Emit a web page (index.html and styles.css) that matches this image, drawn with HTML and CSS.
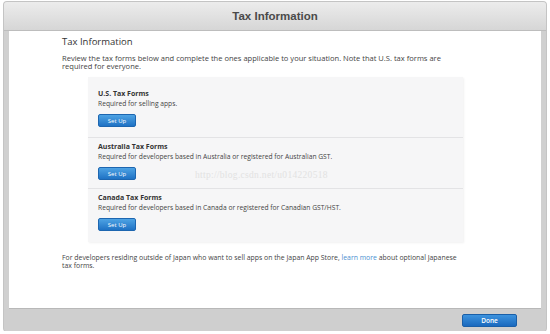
FILE: index.html
```html
<!DOCTYPE html>
<html lang="en">
<head>
    <meta charset="UTF-8">
    <meta name="viewport" content="width=device-width, initial-scale=1.0">
    <title>Tax Information</title>
    <link rel="stylesheet" href="styles.css">
</head>
<body>
    <div class="window">
        <div class="titlebar">Tax Information</div>

        <div class="content">
            <div class="column">
                <h2>Tax Information</h2>
                <p class="intro">Review the tax forms below and complete the ones applicable to your situation. Note that U.S. tax forms are required for everyone.</p>

                <div class="forms">
                    <div class="form-row first">
                        <h3>U.S. Tax Forms</h3>
                        <p>Required for selling apps.</p>
                        <button class="setup-btn">Set Up</button>
                    </div>
                    <div class="form-row">
                        <h3>Australia Tax Forms</h3>
                        <p>Required for developers based in Australia or registered for Australian GST.</p>
                        <button class="setup-btn">Set Up</button>
                    </div>
                    <div class="form-row last">
                        <h3>Canada Tax Forms</h3>
                        <p>Required for developers based in Canada or registered for Canadian GST/HST.</p>
                        <button class="setup-btn">Set Up</button>
                    </div>
                    <!-- watermark from the original capture -->
                    <span class="watermark">http://blog.csdn.net/u014220518</span>
                </div>

                <p class="note">For developers residing outside of Japan who want to sell apps on the Japan App Store, <a href="#">learn more</a> about optional Japanese <span>tax forms.</span></p>
            </div>
        </div>

        <div class="footer">
            <button class="done-btn">Done</button>
        </div>
    </div>
</body>
</html>
```

FILE: styles.css
```css
body {
    margin: 0;
    background-color: #ffffff;
    font-family: "Open Sans", "DejaVu Sans", sans-serif;
    color: #333;
}

.window {
    margin: 2px 4px 0 4px;
    height: 329px;
    display: flex;
    flex-direction: column;
    background-color: #d0d0d0;
    border-radius: 3px;
    box-shadow: 0 0 0 1px #c4c4c4;
    overflow: hidden;
}

.titlebar {
    height: 29px;
    display: flex;
    align-items: center;
    justify-content: center;
    font-family: "Liberation Sans", Arial, sans-serif;
    font-weight: bold;
    font-size: 11.5px;
    color: #4a4a4a;
    background: linear-gradient(#ececec, #d6d6d6);
    border-bottom: 1px solid #bdbdbd;
    box-sizing: border-box;
}

.content {
    height: 278px;
    margin: 0 5px;
    background-color: #ffffff;
    border-bottom: 1px solid #b8b8b8;
    box-sizing: border-box;
}

.column {
    width: 404px;
    margin-left: 53px;
    padding-top: 5px;
}

h2 {
    margin: 0;
    font-size: 9.5px;
    line-height: 12px;
    font-weight: 500;
    color: #333;
}

.intro {
    margin: 6px 0 0 0;
    font-size: 7.55px;
    line-height: 8px;
    color: #444;
}

.forms {
    position: relative;
    width: 375px;
    margin: 7px 0 0 26px;
    background-color: #f6f6f7;
    box-shadow: 1px 1px 2px rgba(0,0,0,0.06);
}

.form-row {
    padding: 4px 10px 8px 10px;
    border-bottom: 1px solid #e3e3e5;
}

.form-row.first {
    padding-top: 12px;
    padding-bottom: 10px;
}

.form-row.last {
    border-bottom: none;
    padding-bottom: 11px;
}

h3 {
    margin: 0;
    font-size: 7px;
    line-height: 10px;
    font-weight: bold;
    color: #333;
}

.form-row p {
    margin: 0;
    font-size: 6.7px;
    line-height: 10px;
    color: #444;
}

.setup-btn {
    display: block;
    margin-top: 5px;
    width: 38px;
    height: 13px;
    padding: 0;
    border: 1px solid #1d66b0;
    border-radius: 2px;
    background: linear-gradient(#4ea3e4, #1f72c4);
    color: #ffffff;
    font-family: "Open Sans", sans-serif;
    font-size: 6px;
    cursor: pointer;
}

.watermark {
    position: absolute;
    left: 107px;
    top: 93px;
    font-family: "Liberation Serif", serif;
    font-size: 9.5px;
    color: #e2e2e2;
    letter-spacing: 0.3px;
}

.note {
    margin: 12px 0 0 0;
    font-size: 6.9px;
    line-height: 8px;
    color: #444;
}

.note a {
    color: #4a8fd0;
    text-decoration: none;
}

.footer {
    flex: 1;
    display: flex;
    align-items: center;
    justify-content: flex-end;
    padding-right: 29px;
    background-color: #cfcfcf;
}

.done-btn {
    width: 55px;
    height: 13px;
    padding: 0;
    border: 1px solid #1a5fa8;
    border-radius: 2px;
    background: linear-gradient(#3d93de, #1a69be);
    color: #ffffff;
    font-family: "Open Sans", sans-serif;
    font-weight: 600;
    font-size: 6.5px;
    cursor: pointer;
}
```
